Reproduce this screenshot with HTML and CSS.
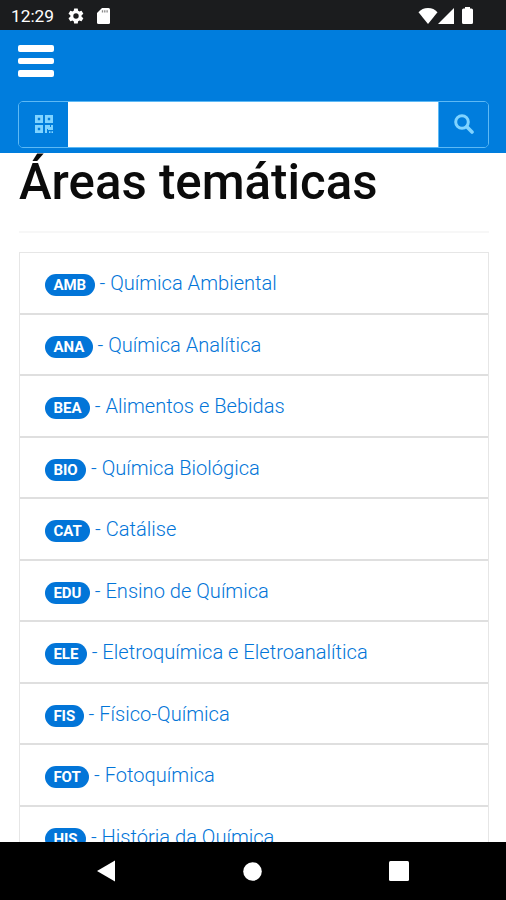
FILE: index.html
```html
<!DOCTYPE html>
<html lang="pt-BR">
<head>
    <meta charset="utf-8">
    <title>Áreas temáticas</title>
    <link rel="stylesheet" href="styles.css">
</head>
<body>
    <div class="status-bar">
        <span class="clock">12:29</span>
        <svg class="gear" width="18" height="18" viewBox="0 0 24 24"><path fill="#fff" d="M19.4 13a7.500 7.500 0 0 0 0-2l2.100-1.600a.5.5 0 0 0 .1-.7l-2-3.400a.5.5 0 0 0-.6-.2l-2.500 1a7.300 7.300 0 0 0-1.700-1L14.400 2.400a.5.5 0 0 0-.5-.4h-4a.5.5 0 0 0-.5.4L9 5.100a7.700 7.700 0 0 0-1.700 1l-2.500-1a.5.5 0 0 0-.6.2l-2 3.400a.5.5 0 0 0 .1.700L4.500 11a8 8 0 0 0 0 2l-2.200 1.600a.5.5 0 0 0-.1.700l2 3.400c.1.200.4.300.6.200l2.500-1c.5.400 1.100.8 1.700 1l.4 2.700c0 .2.2.4.5.4h4c.3 0 .5-.2.5-.4l.4-2.700a7.300 7.300 0 0 0 1.700-1l2.500 1c.2.100.5 0 .6-.2l2-3.400a.5.5 0 0 0-.1-.7zM12 15.600a3.600 3.600 0 1 1 0-7.200 3.600 3.600 0 0 1 0 7.200z"/></svg>
        <svg class="sd-card" width="13" height="16" viewBox="0 0 13 16"><path fill="#fff" d="M5 0h6.500A1.500 1.500 0 0 1 13 1.500v13a1.500 1.500 0 0 1-1.500 1.500h-10A1.500 1.500 0 0 1 0 14.500V5z"/><path stroke="#888" stroke-width="1.300" d="M5.500 2.200v2.200M7.800 2.200v2.200M10.100 2.200v2.200"/></svg>
        <div class="signals">
            <svg width="20" height="16" viewBox="0 0 20 16"><path fill="#fff" d="M.5 4.300C3 1.500 6 0 10 0s7 1.500 9.500 4.300L10 16z"/></svg>
            <svg width="16" height="16" viewBox="0 0 16 16"><path fill="#fff" d="M16 0v16H0z"/></svg>
            <svg class="battery" width="11" height="17" viewBox="0 0 11 17"><path fill="#fff" d="M3 0h5v1.500h1.500Q11 1.500 11 3v12.500Q11 17 9.500 17h-8Q0 17 0 15.500V3q0-1.500 1.500-1.500H3z"/></svg>
        </div>
    </div>

    <header class="navbar">
        <button type="button" class="menu" aria-label="Menu"><span></span><span></span><span></span></button>
        <form class="search">
            <button type="button" aria-label="QR code">
                <svg class="qr" width="18" height="18" viewBox="0 0 18 18" fill="#7fd3ff"><path fill-rule="evenodd" d="M0 0h8v8H0zM2.800 2.800v2.400h2.400V2.800zM10 0h8v8h-8zM12.800 2.800v2.400h2.400V2.800zM0 10h8v8H0zM2.800 12.800v2.400h2.400v-2.400z"/><path d="M10 10h5v2h1v-2h2v5h-5v-1h-1v4h-2zM14 16.200h1.500V18H14zM16.500 16.200H18V18h-1.500z"/></svg>
            </button>
            <input type="text" aria-label="Buscar">
            <button type="button" aria-label="Pesquisar">
                <svg width="20" height="20" viewBox="0 0 20 20"><circle cx="8" cy="8" r="6.300" fill="none" stroke="#7fd3ff" stroke-width="3"/><path d="M12.800 12.800L18 18" stroke="#7fd3ff" stroke-width="3.600" stroke-linecap="round"/></svg>
            </button>
        </form>
    </header>

    <main class="content">
        <h1>Áreas temáticas</h1>
        <hr>
        <ul class="list-group">
            <li><a href="#"><span class="badge">AMB</span> - Química Ambiental</a></li>
            <li><a href="#"><span class="badge">ANA</span> - Química Analítica</a></li>
            <li><a href="#"><span class="badge">BEA</span> - Alimentos e Bebidas</a></li>
            <li><a href="#"><span class="badge">BIO</span> - Química Biológica</a></li>
            <li><a href="#"><span class="badge">CAT</span> - Catálise</a></li>
            <li><a href="#"><span class="badge">EDU</span> - Ensino de Química</a></li>
            <li><a href="#"><span class="badge">ELE</span> - Eletroquímica e Eletroanalítica</a></li>
            <li><a href="#"><span class="badge">FIS</span> - Físico-Química</a></li>
            <li><a href="#"><span class="badge">FOT</span> - Fotoquímica</a></li>
            <li><a href="#"><span class="badge">HIS</span> - História da Química</a></li>
        </ul>
    </main>

    <nav class="system-nav">
        <svg width="18" height="22" viewBox="0 0 18 22"><path fill="#fff" d="M18 0.500v21L0 11z"/></svg>
        <svg width="19" height="19" viewBox="0 0 19 19"><circle fill="#fff" cx="9.500" cy="9.500" r="9.300"/></svg>
        <svg width="20" height="20" viewBox="0 0 20 20"><rect fill="#fff" width="20" height="20" rx="1.500"/></svg>
    </nav>
</body>
</html>
```
FILE: styles.css
```css
* {
    box-sizing: border-box;
}

body {
    margin: 0;
    height: 900px;
    display: flex;
    flex-direction: column;
    overflow: hidden;
    background: #fff;
    font-family: Roboto, sans-serif;
}

svg {
    display: block;
    flex: none;
}

.status-bar {
    flex: none;
    display: flex;
    align-items: center;
    height: 30px;
    padding: 1px 33px 0 11px;
    background: #1b1c1e;
    color: #fff;
}

.clock {
    width: 56px;
    font-size: 17.3px;
}

.sd-card {
    margin-left: 12px;
}

.signals {
    display: flex;
    align-items: center;
    margin-left: auto;
}

.battery {
    margin-left: 8px;
}

.navbar {
    flex: none;
    height: 123px;
    padding: 15px 17px 0 18px;
    background: #007ddd;
}

.menu {
    display: flex;
    flex-direction: column;
    gap: 6px;
    width: 36px;
    padding: 0;
    border: none;
    background: none;
}

.menu span {
    width: 36px;
    height: 6.5px;
    border-radius: 2px;
    background: #fff;
}

.search {
    display: flex;
    height: 47px;
    margin-top: 24px;
    border: 1.5px solid #5db9f5;
    border-radius: 5px;
    overflow: hidden;
}

.search button {
    display: flex;
    align-items: center;
    justify-content: center;
    width: 49px;
    padding: 0;
    border: none;
    background: #007ddd;
}

.search input {
    flex: 1;
    min-width: 0;
    padding: 0 10px;
    border: none;
    border-right: 1px solid #5db9f5;
    background: #fff;
}

.content {
    flex: 1;
    min-height: 0;
    padding: 0 17px 0 19px;
    overflow: hidden;
}

h1 {
    margin: 0;
    font-size: 49.2px;
    font-weight: 500;
    line-height: 59px;
    color: #0b0b0b;
}

hr {
    height: 2px;
    margin: 19px 0;
    border: none;
    background: #f7f7f7;
}

.list-group {
    margin: 0;
    padding: 0;
    list-style: none;
    border: 1.5px solid #e6e6e6;
}

.list-group li {
    height: 61.5px;
    padding: 16px 25px 0;
    border-bottom: 2px solid #dfdfdf;
}

.list-group a {
    display: block;
    font-size: 20.1px;
    font-weight: 300;
    line-height: 28px;
    color: #0275d8;
    text-decoration: none;
    white-space: nowrap;
}

.badge {
    display: inline-block;
    height: 22px;
    padding: 0 8.4px;
    border-radius: 11px;
    background: #0275d8;
    color: #fff;
    font-size: 15px;
    font-weight: 700;
    line-height: 22px;
}

.system-nav {
    flex: none;
    display: flex;
    align-items: center;
    justify-content: space-between;
    height: 58px;
    padding: 0 97px;
    background: #000;
}
```
